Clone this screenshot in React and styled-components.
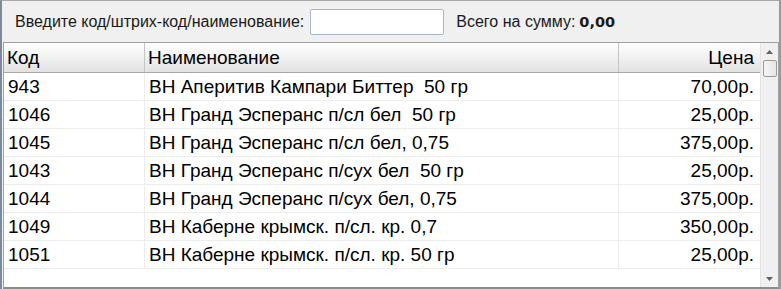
import styled, { createGlobalStyle } from "styled-components";

const rows = [
  { code: "943", name: "ВН Аперитив Кампари Биттер  50 гр", price: "70,00р." },
  { code: "1046", name: "ВН Гранд Эсперанс п/сл бел  50 гр", price: "25,00р." },
  { code: "1045", name: "ВН Гранд Эсперанс п/сл бел, 0,75", price: "375,00р." },
  { code: "1043", name: "ВН Гранд Эсперанс п/сух бел  50 гр", price: "25,00р." },
  { code: "1044", name: "ВН Гранд Эсперанс п/сух бел, 0,75", price: "375,00р." },
  { code: "1049", name: "ВН Каберне крымск. п/сл. кр. 0,7", price: "350,00р." },
  { code: "1051", name: "ВН Каберне крымск. п/сл. кр. 50 гр", price: "25,00р." },
];

const GlobalStyle = createGlobalStyle`
  html, body {
    margin: 0;
    padding: 0;
    background: #f0f0f0;
  }
  body {
    font-family: "Liberation Sans", Arial, sans-serif;
  }
`;

const Window = styled.div`
  width: 781px;
  height: 289px;
  box-sizing: border-box;
  border-top: 1px solid #a8a8a8;
  border-left: 2px solid #7c8b99;
  border-right: 2px solid #9a9a9a;
  background: #f0f0f0;
  display: flex;
  flex-direction: column;
`;

const Toolbar = styled.div`
  height: 41px;
  display: flex;
  align-items: center;
  padding-left: 13px;
  font-size: 16px;
  color: #1a1a1a;
`;

const Label = styled.span`
  margin-right: 6px;
`;

const SearchInput = styled.input`
  width: 134px;
  height: 26px;
  box-sizing: border-box;
  border: 1px solid #a6b8cc;
  border-radius: 2px;
  background: #fff;
  margin: 0 12px 0 0;
  outline: none;
`;

const Total = styled.b`
  font-family: "DejaVu Sans", Verdana, sans-serif;
  font-size: 14.5px;
  margin-left: 4px;
`;

const Grid = styled.div`
  flex: 1;
  margin-left: 1px;
  border: 1px solid #a0a0a0;
  border-bottom: 2px solid #8c8c8c;
  background: #fff;
  display: flex;
  min-height: 0;
`;

const Table = styled.div`
  flex: 1;
  display: flex;
  flex-direction: column;
`;

const columns = "141px 474px 141px";

const HeaderRow = styled.div`
  display: grid;
  grid-template-columns: ${columns};
  height: 30px;
  box-sizing: border-box;
  border-bottom: 1px solid #a8a8a8;
  background: linear-gradient(#ffffff, #f2f2f2 45%, #e2e2e2);
`;

const HeaderCell = styled.div`
  display: flex;
  align-items: center;
  justify-content: ${(p) => (p.$right ? "flex-end" : "flex-start")};
  padding: 0 ${(p) => (p.$right ? "6px" : "3px")};
  font-size: 19px;
  color: #000;
  border-right: ${(p) => (p.$last ? "none" : "1px solid #c4c4c4")};
`;

const Row = styled.div`
  display: grid;
  grid-template-columns: ${columns};
  height: 28px;
  box-sizing: border-box;
  border-bottom: 1px solid #ececec;
`;

const Cell = styled.div`
  display: flex;
  align-items: center;
  justify-content: ${(p) => (p.$right ? "flex-end" : "flex-start")};
  padding: 0 ${(p) => (p.$right ? "6px" : "4px")};
  font-size: 19px;
  color: #000;
  white-space: pre;
  border-right: ${(p) => (p.$last ? "none" : "1px solid #ececec")};
`;

const Scrollbar = styled.div`
  width: 17px;
  background: #f0f0f0;
  border-left: 1px solid #e4e4e4;
  display: flex;
  flex-direction: column;
  align-items: center;
`;

const Arrow = styled.div`
  height: 17px;
  width: 17px;
  display: flex;
  align-items: center;
  justify-content: center;
`;

const Thumb = styled.div`
  width: 14px;
  height: 17px;
  box-sizing: border-box;
  border: 1px solid #9a9a9a;
  border-radius: 2px;
  background: linear-gradient(90deg, #f4f4f4, #e6e6e6);
`;

const Spacer = styled.div`
  flex: 1;
`;

function Triangle({ up }) {
  return (
    <svg width="7" height="4" viewBox="0 0 7 4">
      {up ? (
        <path d="M0 4 L3.5 0 L7 4 Z" fill="#606060" />
      ) : (
        <path d="M0 0 L7 0 L3.5 4 Z" fill="#606060" />
      )}
    </svg>
  );
}

export default function App() {
  return (
    <>
      <GlobalStyle />
      <Window>
        <Toolbar>
          <Label>Введите код/штрих-код/наименование:</Label>
          <SearchInput />
          <span>Всего на сумму:</span>
          <Total>0,00</Total>
        </Toolbar>
        <Grid>
          <Table>
            <HeaderRow>
              <HeaderCell>Код</HeaderCell>
              <HeaderCell>Наименование</HeaderCell>
              <HeaderCell $right $last>
                Цена
              </HeaderCell>
            </HeaderRow>
            {rows.map((r) => (
              <Row key={r.code}>
                <Cell>{r.code}</Cell>
                <Cell>{r.name}</Cell>
                <Cell $right $last>
                  {r.price}
                </Cell>
              </Row>
            ))}
          </Table>
          <Scrollbar>
            <Arrow>
              <Triangle up />
            </Arrow>
            <Thumb />
            <Spacer />
            <Arrow>
              <Triangle />
            </Arrow>
          </Scrollbar>
        </Grid>
      </Window>
    </>
  );
}
